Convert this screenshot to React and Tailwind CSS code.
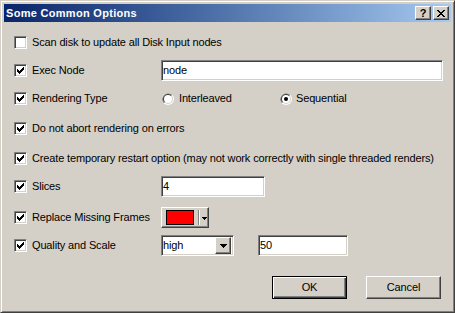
import React from 'react';

const font = "font-['Liberation_Sans',Arial,sans-serif] text-[11px] tracking-[-0.15px] text-black";
const sunken = 'bg-white border border-t-[#808080] border-l-[#808080] border-r-white border-b-white shadow-[inset_1px_1px_0_#404040,inset_-1px_-1px_0_#d4d0c8]';
const raised = 'bg-[#d4d0c8] border border-t-white border-l-white border-r-[#404040] border-b-[#404040] shadow-[inset_-1px_-1px_0_#808080]';

function Check({ checked }) {
  return (
    <div className={`w-[13px] h-[13px] shrink-0 flex items-center justify-center ${sunken}`}>
      {checked && (
        <svg width="7" height="7" viewBox="0 0 7 7" shapeRendering="crispEdges">
          <path d="M0 2h1v3H0z M1 3h1v3H1z M2 4h1v3H2z M3 3h1v3H3z M4 2h1v3H4z M5 1h1v3H5z M6 0h1v3H6z" fill="#000" />
        </svg>
      )}
    </div>
  );
}

function Radio({ checked }) {
  return (
    <svg width="12" height="12" viewBox="0 0 12 12" className="shrink-0">
      <circle cx="6" cy="6" r="6" fill="#fff" />
      <path d="M1.76 10.24A6 6 0 0 1 10.24 1.76Z" fill="#808080" />
      <circle cx="6" cy="6" r="5" fill="#d4d0c8" />
      <path d="M2.46 9.54A5 5 0 0 1 9.54 2.46Z" fill="#404040" />
      <circle cx="6" cy="6" r="4" fill="#fff" />
      {checked && <circle cx="6" cy="6" r="2" fill="#000" />}
    </svg>
  );
}

function Field({ value, className }) {
  return <div className={`h-[21px] pl-[1px] flex items-center ${sunken} ${className}`}>{value}</div>;
}

function Row({ checked = true, label, children, className = '' }) {
  return (
    <div className={`flex items-center h-[21px] ${className}`}>
      <Check checked={checked} />
      <span className="w-[129px] shrink-0 ml-[5px] whitespace-nowrap">{label}</span>
      {children}
    </div>
  );
}

function DownArrow({ w = 7 }) {
  return w === 7 ? (
    <svg width="7" height="4" viewBox="0 0 7 4" shapeRendering="crispEdges"><path d="M0 0h7v1H0z M1 1h5v1H1z M2 2h3v1H2z M3 3h1v1H3z" fill="#000" /></svg>
  ) : (
    <svg width="5" height="3" viewBox="0 0 5 3" shapeRendering="crispEdges"><path d="M0 0h5v1H0z M1 1h3v1H1z M2 2h1v1H2z" fill="#000" /></svg>
  );
}

export default function App() {
  return (
    <div className={`w-[455px] h-[313px] bg-[#d4d0c8] p-[3px] border border-t-[#d4d0c8] border-l-[#d4d0c8] border-r-[#404040] border-b-[#404040] shadow-[inset_1px_1px_0_#fff,inset_-1px_-1px_0_#808080] flex flex-col ${font}`}>
      <div className="h-[18px] shrink-0 flex items-center bg-gradient-to-r from-[#0a246a] to-[#a6caf0] pl-[2px] pr-[2px]">
        <span className="flex-1 font-bold text-white tracking-[0.3px]">Some Common Options</span>
        <div className={`w-[16px] h-[14px] flex items-center justify-center font-bold leading-none ${raised}`}>?</div>
        <div className={`w-[16px] h-[14px] ml-[2px] flex items-center justify-center ${raised}`}>
          <svg width="8" height="7" viewBox="0 0 8 7" shapeRendering="crispEdges">
            <path d="M0 0h2v1H0z M6 0h2v1H6z M1 1h2v1H1z M5 1h2v1H5z M2 2h4v1H2z M3 3h2v1H3z M2 4h4v1H2z M1 5h2v1H1z M5 5h2v1H5z M0 6h2v1H0z M6 6h2v1H6z" fill="#000" />
          </svg>
        </div>
      </div>

      <div className="flex flex-col pl-[10px]">
        <div className="flex items-center h-[21px] mt-[10px]">
          <Check checked={false} />
          <span className="ml-[5px] whitespace-nowrap">Scan disk to update all Disk Input nodes</span>
        </div>
        <Row label="Exec Node" className="mt-[7px]">
          <Field value="node" className="w-[282px]" />
        </Row>
        <Row label="Rendering Type" className="mt-[7px]">
          <div className="flex items-center w-[119px] pl-[1px]">
            <Radio />
            <span className="ml-[5px]">Interleaved</span>
          </div>
          <Radio checked />
          <span className="ml-[4px]">Sequential</span>
        </Row>
        <div className="flex items-center h-[21px] mt-[9px]">
          <Check checked />
          <span className="ml-[5px] whitespace-nowrap">Do not abort rendering on errors</span>
        </div>
        <div className="flex items-center h-[21px] mt-[9px]">
          <Check checked />
          <span className="ml-[5px] whitespace-nowrap">Create temporary restart option (may not work correctly with single threaded renders)</span>
        </div>
        <Row label="Slices" className="mt-[7px]">
          <Field value="4" className="w-[104px]" />
        </Row>
        <Row label="Replace Missing Frames" className="mt-[10px]">
          <div className={`w-[48px] h-[21px] flex items-center pl-[4px] ${raised}`}>
            <div className="w-[28px] h-[15px] bg-[#ff0000] border border-black" />
            <div className="w-[2px] h-[15px] ml-[4px] border-l border-l-[#808080] border-r border-r-white" />
            <div className="ml-[2px] mt-[1px]"><DownArrow w={5} /></div>
          </div>
        </Row>
        <Row label="Quality and Scale" className="mt-[7px]">
          <div className={`w-[73px] h-[21px] pl-[1px] pr-[2px] flex items-center ${sunken}`}>
            <span className="flex-1">high</span>
            <div className={`w-[16px] h-[17px] flex items-center justify-center ${raised}`}>
              <DownArrow />
            </div>
          </div>
          <Field value="50" className="w-[90px] ml-[24px]" />
        </Row>
      </div>

      <div className="flex justify-end gap-[19px] pr-[10px] mt-[20px]">
        <div className="w-[75px] h-[23px] flex items-center justify-center bg-[#d4d0c8] border border-black shadow-[inset_1px_1px_0_#fff,inset_-1px_-1px_0_#404040,inset_-2px_-2px_0_#808080]">OK</div>
        <div className={`w-[75px] h-[23px] flex items-center justify-center ${raised}`}>Cancel</div>
      </div>
    </div>
  );
}
